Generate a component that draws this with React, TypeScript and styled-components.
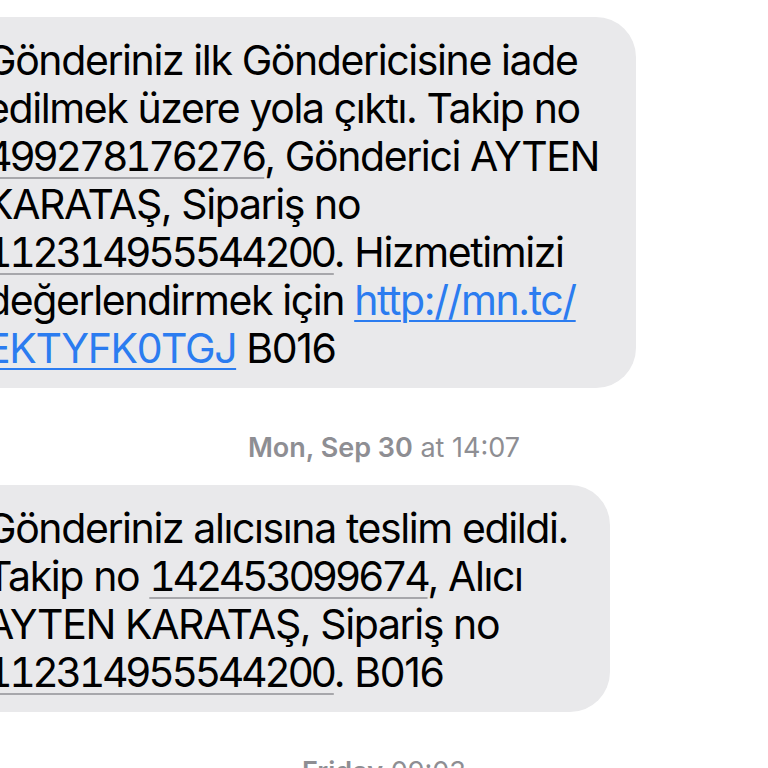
import React from 'react'
import styled, { createGlobalStyle } from 'styled-components'

const GlobalStyle = createGlobalStyle`
  html, body {
    margin: 0;
    padding: 0;
    background: #ffffff;
    overflow: hidden;
  }
  body {
    font-family: "Inter", "Noto Sans", sans-serif;
    -webkit-font-smoothing: antialiased;
  }
`

function App() {
  return (
    <>
      <GlobalStyle />
      <Thread>
        <Bubble $width={696}>
          <Line>Gönderiniz ilk Göndericisine iade</Line>
          <Line>edilmek üzere yola çıktı. Takip no</Line>
          <Line>
            <Num>499278176276</Num>, Gönderici AYTEN
          </Line>
          <Line>KARATAŞ, Sipariş no</Line>
          <Line>
            <Num>112314955544200</Num>. Hizmetimizi
          </Line>
          <Line>
            değerlendirmek için <Link>http://mn.tc/</Link>
          </Line>
          <Line>
            <Link>EKTYFK0TGJ</Link> B016
          </Line>
        </Bubble>

        <Stamp>
          <strong>Mon, Sep 30</strong> at 14:07
        </Stamp>

        <Bubble $width={670}>
          <Line>Gönderiniz alıcısına teslim edildi.</Line>
          <Line>
            Takip no <Num>142453099674</Num>, Alıcı
          </Line>
          <Line>AYTEN KARATAŞ, Sipariş no</Line>
          <Line>
            <Num>112314955544200</Num>. B016
          </Line>
        </Bubble>

        <Stamp>
          <strong>Friday</strong> 09:03
        </Stamp>
      </Thread>
    </>
  )
}

export default App

const Thread = styled.div`
  display: flex;
  flex-direction: column;
  align-items: flex-start;
  padding-top: 17px;
`

const Bubble = styled.div<{ $width: number }>`
  box-sizing: border-box;
  width: ${(p) => p.$width}px;
  margin-left: -60px;
  padding: 19px 0 16px 46px;
  background: #e9e9eb;
  border-radius: 40px;
  color: #000;
  font-size: 41px;
  line-height: 48px;
  letter-spacing: -1.4px;
`

const Line = styled.div`
  white-space: nowrap;
`

const Num = styled.span`
  font-variant-numeric: tabular-nums;
  letter-spacing: -3.4px;
  text-decoration: underline;
  text-decoration-color: #a7a7ab;
  text-decoration-thickness: 2px;
  text-underline-offset: 6px;
`

const Link = styled.span`
  color: #2b7cf0;
  text-decoration: underline;
  text-decoration-color: #2b7cf0;
  text-decoration-thickness: 2px;
  text-underline-offset: 5px;
`

const Stamp = styled.div`
  align-self: stretch;
  margin: 44px 0 21px;
  text-align: center;
  color: #8e8e93;
  font-size: 27px;
  line-height: 32px;

  strong {
    font-weight: 600;
  }
`
